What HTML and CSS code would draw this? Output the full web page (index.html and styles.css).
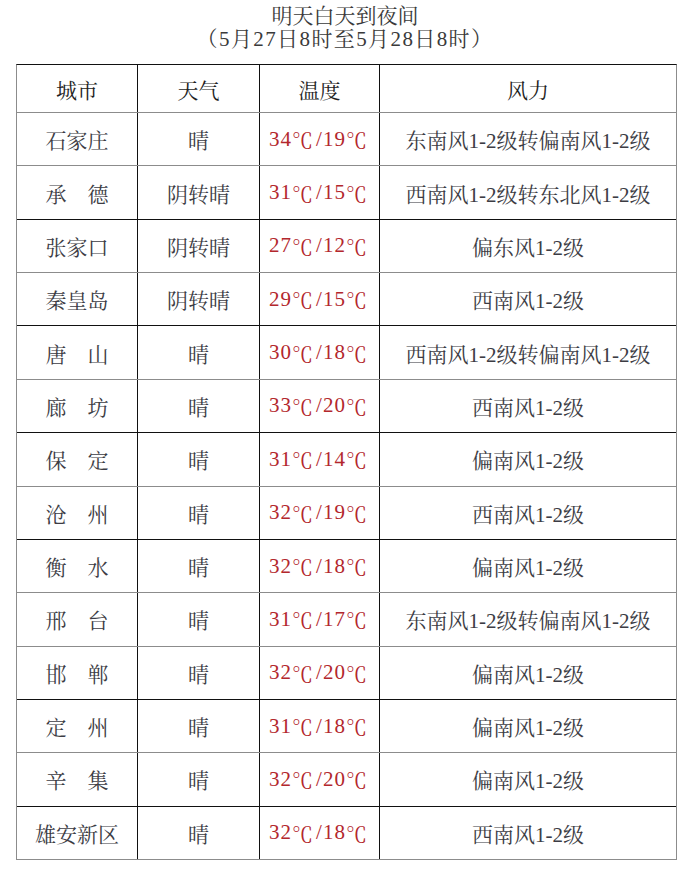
FILE: index.html
```html
<!DOCTYPE html>
<html lang="zh-CN">
<head>
<meta charset="utf-8">
<title>明天白天到夜间</title>
<link rel="stylesheet" href="styles.css">
</head>
<body>
<div class="page">
  <div class="title">
    <div class="title-line">明天白天到夜间</div>
    <div class="title-line title-sub">（5月27日8时至5月28日8时）</div>
  </div>
  <div class="table">
    <div class="row head line-gray">
      <div class="cell">城市</div><div class="cell">天气</div><div class="cell">温度</div><div class="cell">风力</div>
    </div>
    <div class="row line-gray">
      <div class="cell">石家庄</div><div class="cell">晴</div><div class="cell temp">34<span class="deg">℃</span>/19<span class="deg">℃</span></div><div class="cell">东南风1-2级转偏南风1-2级</div>
    </div>
    <div class="row line-black">
      <div class="cell">承　德</div><div class="cell">阴转晴</div><div class="cell temp">31<span class="deg">℃</span>/15<span class="deg">℃</span></div><div class="cell">西南风1-2级转东北风1-2级</div>
    </div>
    <div class="row line-gray">
      <div class="cell">张家口</div><div class="cell">阴转晴</div><div class="cell temp">27<span class="deg">℃</span>/12<span class="deg">℃</span></div><div class="cell">偏东风1-2级</div>
    </div>
    <div class="row line-black">
      <div class="cell">秦皇岛</div><div class="cell">阴转晴</div><div class="cell temp">29<span class="deg">℃</span>/15<span class="deg">℃</span></div><div class="cell">西南风1-2级</div>
    </div>
    <div class="row line-gray">
      <div class="cell">唐　山</div><div class="cell">晴</div><div class="cell temp">30<span class="deg">℃</span>/18<span class="deg">℃</span></div><div class="cell">西南风1-2级转偏南风1-2级</div>
    </div>
    <div class="row line-black">
      <div class="cell">廊　坊</div><div class="cell">晴</div><div class="cell temp">33<span class="deg">℃</span>/20<span class="deg">℃</span></div><div class="cell">西南风1-2级</div>
    </div>
    <div class="row line-gray">
      <div class="cell">保　定</div><div class="cell">晴</div><div class="cell temp">31<span class="deg">℃</span>/14<span class="deg">℃</span></div><div class="cell">偏南风1-2级</div>
    </div>
    <div class="row line-black">
      <div class="cell">沧　州</div><div class="cell">晴</div><div class="cell temp">32<span class="deg">℃</span>/19<span class="deg">℃</span></div><div class="cell">西南风1-2级</div>
    </div>
    <div class="row line-gray">
      <div class="cell">衡　水</div><div class="cell">晴</div><div class="cell temp">32<span class="deg">℃</span>/18<span class="deg">℃</span></div><div class="cell">偏南风1-2级</div>
    </div>
    <div class="row line-gray">
      <div class="cell">邢　台</div><div class="cell">晴</div><div class="cell temp">31<span class="deg">℃</span>/17<span class="deg">℃</span></div><div class="cell">东南风1-2级转偏南风1-2级</div>
    </div>
    <div class="row line-black">
      <div class="cell">邯　郸</div><div class="cell">晴</div><div class="cell temp">32<span class="deg">℃</span>/20<span class="deg">℃</span></div><div class="cell">偏南风1-2级</div>
    </div>
    <div class="row line-gray">
      <div class="cell">定　州</div><div class="cell">晴</div><div class="cell temp">31<span class="deg">℃</span>/18<span class="deg">℃</span></div><div class="cell">偏南风1-2级</div>
    </div>
    <div class="row line-black">
      <div class="cell">辛　集</div><div class="cell">晴</div><div class="cell temp">32<span class="deg">℃</span>/20<span class="deg">℃</span></div><div class="cell">偏南风1-2级</div>
    </div>
    <div class="row line-gray">
      <div class="cell">雄安新区</div><div class="cell">晴</div><div class="cell temp">32<span class="deg">℃</span>/18<span class="deg">℃</span></div><div class="cell">西南风1-2级</div>
    </div>
  </div>
</div>
</body>
</html>
```

FILE: styles.css
```css
* {
  box-sizing: border-box;
}

html, body {
  margin: 0;
  padding: 0;
  background: #ffffff;
}

body {
  font-family: "Liberation Serif", "Noto Serif CJK SC", "Source Han Serif SC", "AR PL UMing CN", "Noto Sans CJK SC", serif;
  color: #3c3c44;
}

.page {
  width: 690px;
  height: 892px;
  padding-top: 5px;
}

.title {
  text-align: center;
  font-size: 21px;
  line-height: 23px;
  color: #3a3a3a;
  margin-bottom: 13px;
}

.title-sub {
  letter-spacing: 1.4px;
}

.table {
  margin-left: 16px;
  width: 661px;
  border-top: 1px solid #111111;
  border-left: 1px solid #8c8c8c;
  border-right: 1px solid #8c8c8c;
}

.row {
  display: grid;
  grid-template-columns: 121px 122px 120px 296px;
  height: 53.36px;
}

.row.head {
  height: 48px;
  color: #1e1e1e;
  font-size: 20px;
}

.line-gray {
  border-bottom: 1px solid #8c8c8c;
}

.line-black {
  border-bottom: 1px solid #111111;
}

.cell {
  display: flex;
  align-items: center;
  justify-content: center;
  border-right: 1px solid #111111;
  font-size: 21px;
  white-space: nowrap;
}

.cell:last-child {
  border-right: none;
}

.temp {
  color: #b3272d;
  letter-spacing: 1px;
}

.deg {
  font-family: "Noto Serif CJK SC", "Noto Sans CJK SC", sans-serif;
  font-feature-settings: "fwid" 1;
  letter-spacing: 0;
  margin-right: 3px;
}
```
